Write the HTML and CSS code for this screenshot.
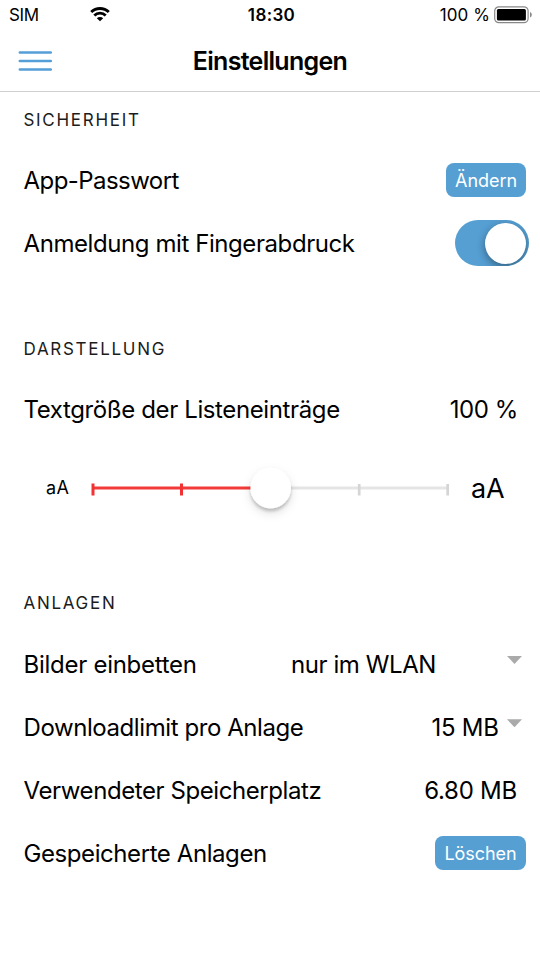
FILE: index.html
```html
<!DOCTYPE html>
<html lang="de"><head><meta charset="utf-8"><title>Einstellungen</title><link rel="stylesheet" href="styles.css"></head>
<body>
<div class="status">
  <div class="carrier"><span class="sim">SIM</span>
    <svg class="wifi" width="20" height="15" viewBox="0 0 20 15"><path d="M1.200 5.100a12.500 12.500 0 0 1 17.600 0M4.300 8.600a8 8 0 0 1 11.400 0" fill="none" stroke="#000" stroke-width="2.800"/><path d="M6.800 11.200a4.600 4.600 0 0 1 6.400 0L10 14.300z"/></svg>
  </div>
  <span class="time">18:30</span>
  <div class="power"><span class="percent">100 %</span>
    <svg width="38" height="18" viewBox="0 0 38 18"><rect x=".7" y=".8" width="33.400" height="15.900" rx="4.200" fill="none" stroke="#888" stroke-width="1.200"/><rect x="2.900" y="3" width="29" height="11.500" rx="1.500"/><path d="M36 6q1.800.7 1.800 2.700T36 11.500z" fill="#888"/></svg>
  </div>
</div>
<header class="navbar">
  <svg class="menu" width="34" height="22" viewBox="0 0 34 22"><path d="M1.800 2.500h31M1.800 11h31M1.800 19.500h31" stroke="#549fd7" stroke-width="2.500" stroke-linecap="round"/></svg>
  <h1 class="title">Einstellungen</h1>
</header>
<main>
  <section class="security">
    <h2 class="heading"><span class="h-sec">SICHERHEIT</span></h2>
    <div class="row"><span class="t-pass">App-Passwort</span><button class="btn btn-change"><span class="b1">Ändern</span></button></div>
    <div class="row"><span class="t-finger">Anmeldung mit Fingerabdruck</span><span class="toggle"><span class="thumb"></span></span></div>
  </section>
  <section class="display">
    <h2 class="heading"><span class="h-dis">DARSTELLUNG</span></h2>
    <div class="row"><span class="t-size">Textgröße der Listeneinträge</span><span class="value v-size">100 %</span></div>
    <div class="slider"><span class="small">aA</span>
      <svg width="400" height="94" viewBox="0 -12 400 94"><defs><filter id="shadow" x="-50%" y="-50%" width="200%" height="200%"><feDropShadow dx="0" dy="3" stdDeviation="1.500" flood-opacity=".18"/><feDropShadow dx="0" dy="4" stdDeviation="5" flood-opacity=".13"/></filter></defs><path d="M202 35h177" stroke="#e5e5e5" stroke-width="3"/><path d="M291.200 31v11.500M379.700 31v11.500" stroke="#d5d5d5" stroke-width="2.700"/><path d="M24 35h178" stroke="#f23a3a" stroke-width="3"/><path d="M25 30.500v12M113.500 30.500v12" stroke="#f23232" stroke-width="3"/><circle cx="202.700" cy="35" r="20.300" fill="#fff" filter="url(#shadow)"/></svg>
      <span class="large">aA</span></div>
  </section>
  <section class="attachments">
    <h2 class="heading"><span class="h-att">ANLAGEN</span></h2>
    <div class="row"><span class="t-img">Bilder einbetten</span><span class="select-wide"><span class="v-wlan">nur im WLAN</span><i class="arrow"></i></span></div>
    <div class="row"><span class="t-limit">Downloadlimit pro Anlage</span><span class="select"><span class="v-limit">15 MB</span><i class="arrow"></i></span></div>
    <div class="row"><span class="t-used">Verwendeter Speicherplatz</span><span class="value v-used">6.80 MB</span></div>
    <div class="row"><span class="t-saved">Gespeicherte Anlagen</span><button class="btn btn-delete"><span class="b2">Löschen</span></button></div>
  </section>
</main>
</body></html>
```
FILE: styles.css
```css
* { box-sizing: border-box; }
body { margin: 0; width: 540px; height: 960px; overflow: hidden; background: #fff; color: #000; font-family: Inter, "Liberation Sans", sans-serif; font-size: 24px; letter-spacing: -.42px; }
span { white-space: nowrap; }
svg { display: block; flex-shrink: 0; }
.status { height: 30px; display: grid; grid-template-columns: 1fr auto 1fr; align-items: center; font-size: 17px; letter-spacing: -.1px; padding: 0 8px 0 9px; }
.carrier, .power { display: flex; align-items: center; }
.carrier { gap: 51.5px; }
.sim { letter-spacing: -.3px; }
.wifi { margin-top: -1px; }
.power { justify-content: flex-end; gap: 4px; }
.percent { letter-spacing: .1px; }
.time { font-weight: 600; letter-spacing: .35px; padding-left: 2px; }
.navbar { height: 62px; border-bottom: 1px solid #d0d0d0; display: grid; grid-template-columns: 34px 1fr 34px; align-items: center; padding: 0 18px; }
.title { margin: 0; text-align: center; font-size: 25px; font-weight: 600; letter-spacing: -.7px; }
.heading { margin: 0; height: 57px; padding: 0 23.5px; line-height: 56px; font-size: 17px; font-weight: 400; letter-spacing: 1.7px; color: #1c1c1c; }
.row { height: 63.3px; display: flex; align-items: center; justify-content: space-between; padding: 0 14px 0 23.5px; }
.security { height: 229px; }
.display { height: 255px; }
.attachments { margin-top: -.6px; }
.attachments .heading { line-height: 57.6px; }
.t-pass { letter-spacing: -.56px; }
.t-size { letter-spacing: -.38px; }
.t-img { letter-spacing: -.27px; }
.value { margin-right: 9px; }
.v-size { margin-right: 8px; }
.v-used, .v-limit { letter-spacing: -.25px; }
.v-wlan { letter-spacing: -.42px; }
.btn { height: 34px; border: 0; border-radius: 8px; background: #559fd3; color: #fff; font: 18px Inter, sans-serif; letter-spacing: -.05px; padding: 0; margin-top: -1px; }
.btn-change { width: 80px; }
.btn-delete { width: 91px; }
.toggle { width: 74px; height: 46px; border-radius: 23px; background: #559fd3; margin: -1px -3px 0 0; padding: 3px 3px 3px 0; display: flex; justify-content: flex-end; overflow: hidden; }
.thumb { width: 41px; height: 41px; border-radius: 50%; background: #fff; box-shadow: 0 3px 8px #0006; }
.slider { height: 94px; display: flex; align-items: center; padding-left: 46px; }
.small { width: 22px; font-size: 18px; letter-spacing: .5px; margin-top: -1px; }
.large { font-size: 27px; margin: 1px 0 0 3px; letter-spacing: -.1px; }
.select, .select-wide { display: flex; align-items: center; justify-content: space-between; margin-right: 4px; }
.select { width: 90.5px; }
.select-wide { width: 231px; }
.arrow { width: 15px; height: 8px; background: #aaa; clip-path: polygon(0 0, 100% 0, 50% 100%); margin-top: -8px; }
```
